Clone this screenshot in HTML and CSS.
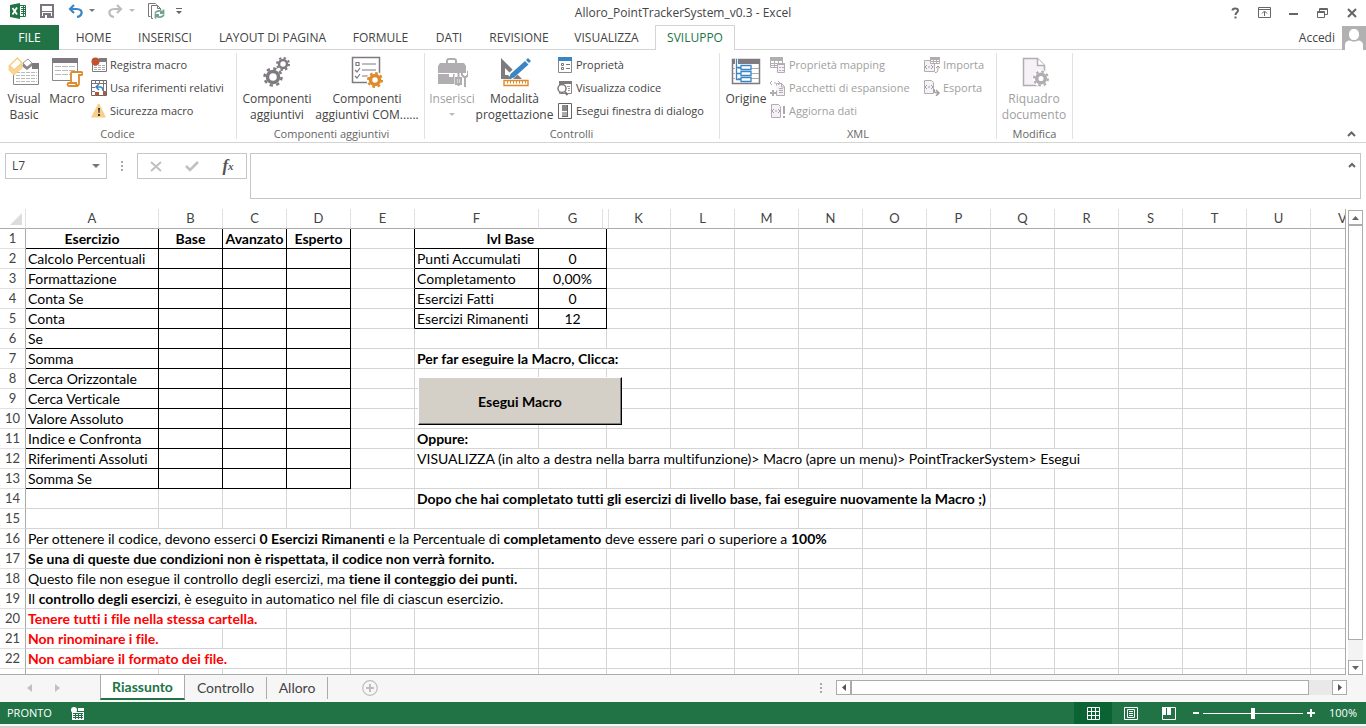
FILE: index.html
```html
<!DOCTYPE html>
<html lang="it">
<head>
<meta charset="utf-8">
<title>Alloro_PointTrackerSystem_v0.3 - Excel</title>
<link rel="stylesheet" href="styles.css">
</head>
<body>
<header class="titlebar">
  <div class="quick">
    <svg class="q-excel" width="16" height="16" viewBox="0 0 16 16"><path fill="#217346" d="M0 2 10 0v16L0 14z"/><path fill="#fff" stroke="#217346" d="M10 2.500h5.500v11H10"/><path stroke="#217346" stroke-width="1" fill="none" d="M11 4.500h4M11 6.500h4M11 8.500h4M11 10.500h4M13.500 3v10"/><path stroke="#fff" stroke-width="1.800" d="M2.500 5 7 11.500M7 4.500 2.500 11.500"/></svg>
    <button class="plain q-save" aria-label="Salva"><svg width="14" height="14" viewBox="0 0 14 14"><path fill="none" stroke="#7a757d" stroke-width="2" d="M1 1h12v12H1z"/><path fill="#7a757d" d="M1 7h12v1H1zM3 9h8v5H3z"/><path fill="#fff" d="M5 11h2v3H5z"/></svg></button>
    <button class="plain q-undo" aria-label="Annulla"><svg width="15" height="14" viewBox="0 0 15 14"><path fill="none" stroke="#3a86c4" stroke-width="2.200" d="M6 1 2 5l4 4M2 5h6.500c4 0 5.500 2 5 4.500-.300 1.500-2 3-4.500 3.500"/></svg></button>
    <button class="plain q-caret" aria-label="Elenco annulla"><svg width="6" height="4" viewBox="0 0 6 4"><path fill="#777" d="M0 0h6L3 3z"/></svg></button>
    <button class="plain q-redo" aria-label="Ripeti"><svg width="15" height="14" viewBox="0 0 15 14"><path fill="none" stroke="#bdbdbd" stroke-width="2.200" d="m9 1 4 4-4 4M13 5H6.500c-4 0-5.500 2-5 4.500.300 1.500 2 3 4.500 3.500"/></svg></button>
    <button class="plain q-caret" aria-label="Elenco ripeti"><svg width="6" height="4" viewBox="0 0 6 4"><path fill="#bbb" d="M0 0h6L3 3z"/></svg></button>
    <button class="plain q-doc" aria-label="Aggiorna"><svg width="17" height="16" viewBox="0 0 17 16"><path fill="none" stroke="#777" d="M2.500 13.500h-2V.500h7l1 1M5 15.500H3.500v-13h6l3 3V7M9.500 2.500v3h3"/><path fill="none" stroke="#6fa58a" stroke-width="1.800" d="M7 10.500C8 7.500 13 7 15 9.500M15.500 6.500v3.500H12M16 11.500c-1 3-6 3.500-8 1M7.500 15.500V12H11"/></svg></button>
    <button class="plain q-more" aria-label="Personalizza barra"><svg width="6" height="8" viewBox="0 0 6 8"><path fill="#666" d="M0 1h6v1H0zM0 4h6L3 7z"/></svg></button>
  </div>
  <h1 class="title">Alloro_PointTrackerSystem_v0.3 - Excel</h1>
  <div class="window">
    <button class="plain" aria-label="Guida"><svg width="9" height="12" viewBox="0 0 9 12"><path fill="none" stroke="#666" stroke-width="2" d="M1.500 3.500C1.500 1 7 .500 7 3.500c0 2-2.500 2-2.500 4.500M4.500 9.500v2"/></svg></button>
    <button class="plain" aria-label="Opzioni barra multifunzione"><svg width="13" height="11" viewBox="0 0 13 11"><path fill="none" stroke="#666" d="M.500.500h12v10H.500zM1 2.500h11M6.500 9V4.500M4 6.500 6.500 4 9 6.500"/></svg></button>
    <button class="plain" aria-label="Riduci"><svg width="10" height="10" viewBox="0 0 10 10"><path fill="#666" d="M0 5h9v2H0z"/></svg></button>
    <button class="plain" aria-label="Ripristina"><svg width="11" height="10" viewBox="0 0 11 10"><path fill="none" stroke="#666" d="M2.500 3V.500h8v6H8M2 1.500h8M.500 3.500h7v6H.500zM0 4.500h8"/></svg></button>
    <button class="plain" aria-label="Chiudi"><svg width="10" height="10" viewBox="0 0 10 10"><path stroke="#666" stroke-width="2" d="m1 1 8 8M9 1 1 9"/></svg></button>
  </div>
</header>

<nav class="tabs">
  <button class="tab file">FILE</button>
  <button class="tab">HOME</button>
  <button class="tab">INSERISCI</button>
  <button class="tab">LAYOUT DI PAGINA</button>
  <button class="tab">FORMULE</button>
  <button class="tab">DATI</button>
  <button class="tab">REVISIONE</button>
  <button class="tab">VISUALIZZA</button>
  <button class="tab current">SVILUPPO</button>
  <a class="account" href="#">Accedi
    <svg width="24" height="24" viewBox="0 0 24 24"><path fill="#b1b1b1" d="M0 0h24v24H0z"/><path fill="#fff" d="M12 3c3 0 5 2 5 5.500S15 14 12 14s-5-2-5-5.500S9 3 12 3zM3 24v-5c0-3 2-4.500 5-4.500 2 1.500 6 1.500 8 0 3 0 5 1.500 5 4.500v5z"/></svg>
  </a>
</nav>

<section class="ribbon">
  <div class="group g-code">
    <div class="tools">
      <button class="big w42"><svg width="32" height="32" viewBox="0 0 32 32"><path fill="#fff" stroke="#8a868c" d="M5.500 9.500h25v19h-25z"/><path fill="#7f7a80" d="M24 7h7v6h-7z"/><path stroke="#bbb" stroke-dasharray="4 1" d="M8 16.500h21M8 19.500h21M8 22.500h21M8 25.500h21"/><path fill="#fbd596" stroke="#f6ce85" d="m1 10 5 3 8-6v5l-8 7-5-5z"/><path fill="#fff" stroke="#f6ce85" stroke-width="1.500" d="m1.500 9.500 8-7.500 4.500 5-8 7z"/><path fill="#8a868c" d="m15 7 4 2 5-3v4l-5 4-4-3z"/><path fill="#fff" stroke="#999" d="m15 7 5-4 4 4-5 4z"/></svg><span>Visual<br>Basic</span></button>
      <button class="big w44"><svg width="32" height="32" viewBox="0 0 32 32"><path fill="#fff" stroke="#8a868c" d="M1.500 3.500h25v21h-25z"/><path fill="#7f7a80" d="M1 2h26v5H1z"/><path stroke="#bbb" stroke-dasharray="6 1" d="M4 10.500h20M4 14.500h20M4 18.500h20"/><path fill="#fff" stroke="#dd8b2b" stroke-width="1.800" d="M20 27V17c0-1 1-1 1-1h9c2 0 2 3 0 3h-2v8c0 3-2 3-3 3h-7c-2 0-2-3 0-3h7c0 2 1 3 2 3"/></svg><span>Macro</span></button>
      <div class="smalls">
        <button class="small"><svg width="16" height="16" viewBox="0 0 16 16"><path fill="#fff" stroke="#7f7a80" d="M1.500 2.500h14v12h-14z"/><path fill="#7f7a80" d="M8 1h8v4H8z"/><path stroke="#aaa" stroke-dasharray="3 1" d="M3 8.500h11M3 10.500h11M3 12.500h11"/><circle cx="4.500" cy="4.500" r="4" fill="#c0532d"/></svg>Registra macro</button>
        <button class="small"><svg width="16" height="16" viewBox="0 0 16 16"><path fill="#fff" stroke="#666" d="M.500.500h15v15H.500z"/><path fill="none" stroke="#777" d="M4.500 0v16M8.500 0v4M12.500 0v16M0 3.500h16M0 7.500h4M0 11.500h16"/><path fill="#fff" d="M4 4h8v8H4z"/><path fill="none" stroke="#3a86c4" stroke-width="1.500" d="M8 4 5 7l3 3M5 7h4c3 0 3 2 3 4"/><path fill="#c0532d" d="M4 12h4v3H4zM12 12h3v3h-3z"/></svg>Usa riferimenti relativi</button>
        <button class="small"><svg width="16" height="16" viewBox="0 0 16 16"><path fill="#f9cf87" d="M7 1h1.500L15 14.500H0z"/><path fill="#333" d="M7 5h2l-.500 5h-1zM7 11h2v2H7z"/></svg>Sicurezza macro</button>
      </div>
    </div>
    <div class="caption">Codice</div>
  </div>
  <div class="group g-addins">
    <div class="tools">
      <button class="big w76"><svg width="32" height="32" viewBox="0 0 32 32"><g fill="none" stroke="#7f7a80"><circle cx="12" cy="21" r="5.500" stroke-width="3.500"/><circle cx="12" cy="21" r="8.500" stroke-width="2.500" stroke-dasharray="3.300 3.370"/><circle cx="22" cy="8" r="4" stroke-width="2.500"/><circle cx="22" cy="8" r="6" stroke-width="2" stroke-dasharray="2.300 2.410"/></g></svg><span>Componenti<br>aggiuntivi</span></button>
      <button class="big w104"><svg width="32" height="32" viewBox="0 0 32 32"><path fill="#fff" stroke="#7f7a80" stroke-width="1.500" d="M1.500 1.500h27v25h-27z"/><path stroke="#7f7a80" stroke-width="1.200" fill="none" d="M5 6.500h3v3H5zM11 8h14M11 14h14M11 20h8M4 14l2 2 3-4M4 20l2 2 3-4"/><circle cx="24" cy="24" r="8.500" fill="#fff"/><circle cx="24" cy="24" r="4.500" fill="none" stroke="#dd8b2b" stroke-width="3.500"/><circle cx="24" cy="24" r="7" fill="none" stroke="#dd8b2b" stroke-width="2" stroke-dasharray="2.750 2.750"/></svg><span>Componenti<br>aggiuntivi COM......</span></button>
    </div>
    <div class="caption">Componenti aggiuntivi</div>
  </div>
  <div class="group g-controls">
    <div class="tools">
      <button class="big w48" disabled><svg width="32" height="32" viewBox="0 0 32 32"><path fill="none" stroke="#b1aeb2" stroke-width="2" d="M11 8V5c0-1 1-2 2-2h5c1 0 2 1 2 2v3"/><path fill="#b1aeb2" d="M4 7h24l2 3v7H2v-7zM2 18h11v3h4v-3h13v10H2z"/><path stroke="#fff" stroke-width="7" d="M22 18v12M28 18v12"/><path fill="none" stroke="#b1aeb2" stroke-width="2" d="M22.500 16v14M20 22h5v6h-5zM29 31V21M26 15v4l2 2h2l2-2v-4"/></svg><span>Inserisci</span><svg class="drop" width="6" height="4" viewBox="0 0 6 4"><path fill="#bbb" d="M0 0h6L3 3z"/></svg></button>
      <button class="big w77"><svg width="32" height="32" viewBox="0 0 32 32"><path fill="#7f7a80" fill-rule="evenodd" d="M2 2 23 23H2zM6 12v7h7z"/><path stroke="#fff" stroke-width="7" d="M11 21 31 2"/><path fill="#3a86c4" d="m10 23 1.500-5L26 5l3.500 3.500L15 21.500zM27 4l2-2 3 3-2 2z"/><path fill="#fff" stroke="#dd8b2b" stroke-width="1.400" d="M5 24.500h24v5H5z"/><path stroke="#dd8b2b" d="M8.500 25v2.500M11.500 25v2.500M14.500 25v2.500M17.500 25v2.500M20.500 25v2.500M23.500 25v2.500M26.500 25v2.500"/></svg><span>Modalità<br>progettazione</span></button>
      <div class="smalls wide">
        <button class="small"><svg width="16" height="16" viewBox="0 0 16 16"><path fill="#fff" stroke="#8a868c" d="M1.500 1.500h13v14h-13z"/><path fill="#3a86c4" d="M1 0h14v4H1z"/><path fill="none" stroke="#777" d="M4.500 6.500h2v2h-2zM4.500 10.500h2v2h-2zM9 7.500h4M9 11.500h4"/></svg>Proprietà</button>
        <button class="small"><svg width="16" height="16" viewBox="0 0 16 16"><path fill="#fff" stroke="#8a868c" d="M2.500 2.500h12v11h-12z"/><path fill="#7f7a80" d="M2 1h13v3H2z"/><path stroke="#999" d="M10 6.500h3M11 8.500h2M11 10.500h2"/><circle cx="5" cy="8.500" r="4" fill="#fff" stroke="#777" stroke-width="1.500"/><path stroke="#777" stroke-width="2" d="m8 12 2.500 3"/></svg>Visualizza codice</button>
        <button class="small"><svg width="16" height="16" viewBox="0 0 16 16"><path fill="#fff" stroke="#666" d="M1.500.500h13v15h-13z"/><path fill="#8a868c" d="M5 2h6v6H5z"/><path fill="#aaa" d="M5 9h6v5H5z"/><path stroke="#666" d="M10.500 2v12M5 13.500h6"/></svg>Esegui finestra di dialogo</button>
      </div>
    </div>
    <div class="caption">Controlli</div>
  </div>
  <div class="group g-xml">
    <div class="tools">
      <button class="big w44"><svg width="32" height="32" viewBox="0 0 32 32"><path fill="#fff" stroke="#7f7a80" stroke-width="1.500" d="M2.500 3.500h27v24h-27z"/><path fill="#7f7a80" d="M2 3h28v5H2z"/><path stroke="#aaa" d="M3 12.500h26M3 17.500h26M3 22.500h26"/><path fill="none" stroke="#fff" stroke-width="3" d="M6.500 3v21"/><path fill="none" stroke="#3a86c4" stroke-width="1.300" d="M6.500 3v20.500H11M6.500 11.500H11M6.500 17.500H11"/><path fill="#fff" stroke="#3a86c4" stroke-width="1.300" d="M11 9.500h10v4H11zM11 15.500h10v4H11zM11 21.500h10v4H11z"/></svg><span>Origine</span></button>
      <div class="smalls first">
        <button class="small" disabled><svg width="16" height="16" viewBox="0 0 16 16"><path fill="#fff" stroke="#b1aeb2" d="M.500 1.500h12v9H.500zM4.500 4v6M8.500 4v6M0 6.500h12M0 8.500h12"/><path fill="#b1aeb2" d="M0 0h13v4H0z"/><path fill="#f6f1f6" stroke="#b1aeb2" d="M7.500 6.500h7v9h-7z"/><path fill="#b1aeb2" d="M7 6h8v2H7zM9 10h2v1H9zM12 10h2v1h-2zM9 13h2v1H9zM12 13h2v1h-2z"/></svg>Proprietà mapping</button>
        <button class="small" disabled><svg width="16" height="16" viewBox="0 0 16 16"><path fill="#f6f1f6" stroke="#b1aeb2" d="M6.500 5.500V3.500h5l3 3v9h-8v-5"/><path fill="none" stroke="#b1aeb2" d="M11.500 3v4h3M9 8.500h4M9 10.500h4M9 12.500h4M2 1 0 3l2 2M8 1l2 2-2 2M4 3h2"/><path stroke="#b1aeb2" stroke-width="2" d="M3 10v6M0 13h6"/></svg>Pacchetti di espansione</button>
        <button class="small" disabled><svg width="16" height="16" viewBox="0 0 16 16"><path fill="#f6f1f6" stroke="#b1aeb2" d="M1.500 1.500h7l2 2v11h-9z"/><path fill="none" stroke="#a09da1" d="m4 6-2 2 2 2M8 6l2 2-2 2M5 8h2"/><path stroke="#aaa" stroke-width="2" d="M14 3v8M14 13v2"/></svg>Aggiorna dati</button>
      </div>
      <div class="smalls">
        <button class="small" disabled><svg width="16" height="16" viewBox="0 0 16 16"><path fill="#f6f1f6" stroke="#b1aeb2" d="M.500 3.500h10v11H.500z"/><path fill="#b1aeb2" d="M6 0h10v3H6z"/><path fill="#fff" stroke="#b1aeb2" d="M6.500 2.500h9v4h-9zM9.500 2v4M12.500 2v4M6 4.500h9"/><path fill="none" stroke="#a09da1" d="m3 8-2 2 2 2M7 8l2 2-2 2M4 10h2M11 15.500c3 0 3-2 3-6M12 11l2-2 2 2"/></svg>Importa</button>
        <button class="small" disabled><svg width="16" height="16" viewBox="0 0 16 16"><path fill="#f6f1f6" stroke="#b1aeb2" d="M.500.500h7l2 2v11h-9z"/><path fill="none" stroke="#a09da1" d="m3 5-2 2 2 2M7 5l2 2-2 2M4 7h2"/><path fill="none" stroke="#a09da1" stroke-width="1.500" d="M10 9c0 4 1 4 5 4M12 10l3 3-3 3"/></svg>Esporta</button>
      </div>
    </div>
    <div class="caption">XML</div>
  </div>
  <div class="group g-edit">
    <div class="tools">
      <button class="big w74" disabled><svg width="32" height="32" viewBox="0 0 32 32"><path fill="#f6f1f6" stroke="#b1aeb2" stroke-width="1.500" d="M5.500 2.500h14l7 7v20h-21z"/><path fill="#fff" stroke="#b1aeb2" stroke-width="1.500" d="M19.500 2.500v7h7"/><circle cx="23" cy="22.500" r="8.500" fill="#fff"/><circle cx="23" cy="22.500" r="4.300" fill="none" stroke="#b1aeb2" stroke-width="3.500"/><circle cx="23" cy="22.500" r="7" fill="none" stroke="#b1aeb2" stroke-width="2" stroke-dasharray="2.750 2.750"/></svg><span>Riquadro<br>documento</span></button>
    </div>
    <div class="caption">Modifica</div>
  </div>
  <button class="plain collapse" aria-label="Comprimi barra multifunzione"><svg width="9" height="6" viewBox="0 0 9 6"><path fill="none" stroke="#666" stroke-width="2" d="m1 5 3.500-3.500L8 5"/></svg></button>
</section>

<section class="formula-bar">
  <div class="namebox"><input aria-label="Casella nome" value="L7"><button class="plain" aria-label="Elenco nomi"><svg width="8" height="5" viewBox="0 0 8 5"><path fill="#777" d="M0 0h8L4 4z"/></svg></button></div>
  <svg class="grip" width="4" height="11" viewBox="0 0 4 11"><path fill="#aaa" d="M1 0h2v2H1zM1 4h2v2H1zM1 8h2v2H1z"/></svg>
  <div class="entry">
    <button class="plain" aria-label="Annulla immissione"><svg width="12" height="11" viewBox="0 0 12 11"><path stroke="#c0c0c0" stroke-width="2" d="m1 1 10 9M11 1 1 10"/></svg></button>
    <button class="plain" aria-label="Invio"><svg width="14" height="11" viewBox="0 0 14 11"><path fill="none" stroke="#c0c0c0" stroke-width="2.500" d="m1 5 4 4 8-8"/></svg></button>
    <button class="plain fx" aria-label="Inserisci funzione"><i>f</i><sub>x</sub></button>
  </div>
  <div class="formula"><textarea aria-label="Barra della formula"></textarea><button class="plain" aria-label="Comprimi barra della formula"><svg width="8" height="6" viewBox="0 0 8 6"><path fill="none" stroke="#666" stroke-width="2" d="m1 5 3-3 3 3"/></svg></button></div>
</section>

<main class="sheet">
  <div class="grid-area">
    <table class="cells">
      <colgroup><col class="c-head"><col class="c-a"><col span="4" class="c-std"><col class="c-f"><col class="c-g"><col span="12" class="c-std"></colgroup>
      <thead>
        <tr><th class="corner"><svg width="12" height="12" viewBox="0 0 12 12"><path fill="#dcdcdc" d="M12 0v12H0z"/></svg></th><th>A</th><th>B</th><th>C</th><th>D</th><th>E</th><th>F</th><th class="hidden-next">G</th><th>K</th><th>L</th><th>M</th><th>N</th><th>O</th><th>P</th><th>Q</th><th>R</th><th>S</th><th>T</th><th>U</th><th>V</th></tr>
      </thead>
      <tbody>
        <tr><th>1</th><td class="k b c">Esercizio</td><td class="k b c">Base</td><td class="k b c">Avanzato</td><td class="k b c">Esperto</td><td class="kr"></td><td class="k b c" colspan="2">lvl Base</td><td><td><td><td><td><td><td><td><td><td><td><td></tr>
        <tr><th>2</th><td class="k">Calcolo Percentuali</td><td class="k"><td class="k"><td class="k"><td class="kr"><td class="k">Punti Accumulati</td><td class="k c">0</td><td><td><td><td><td><td><td><td><td><td><td><td></tr>
        <tr><th>3</th><td class="k">Formattazione</td><td class="k"><td class="k"><td class="k"><td class="kr"><td class="k">Completamento</td><td class="k c">0,00%</td><td><td><td><td><td><td><td><td><td><td><td><td></tr>
        <tr><th>4</th><td class="k">Conta Se</td><td class="k"><td class="k"><td class="k"><td class="kr"><td class="k">Esercizi Fatti</td><td class="k c">0</td><td><td><td><td><td><td><td><td><td><td><td><td></tr>
        <tr><th>5</th><td class="k">Conta</td><td class="k"><td class="k"><td class="k"><td class="kr"><td class="k">Esercizi Rimanenti</td><td class="k c">12</td><td><td><td><td><td><td><td><td><td><td><td><td></tr>
        <tr><th>6</th><td class="k">Se</td><td class="k"><td class="k"><td class="k"><td><td><td><td><td><td><td><td><td><td><td><td><td><td><td></tr>
        <tr><th>7</th><td class="k">Somma</td><td class="k"><td class="k"><td class="k"><td><td class="b" colspan="3">Per far eseguire la Macro, Clicca:</td><td><td><td><td><td><td><td><td><td><td><td></tr>
        <tr><th>8</th><td class="k">Cerca Orizzontale</td><td class="k"><td class="k"><td class="k"><td><td class="host"><button class="run-macro">Esegui Macro</button></td><td><td><td><td><td><td><td><td><td><td><td><td><td></tr>
        <tr><th>9</th><td class="k">Cerca Verticale</td><td class="k"><td class="k"><td class="k"><td><td><td><td><td><td><td><td><td><td><td><td><td><td><td></tr>
        <tr><th>10</th><td class="k">Valore Assoluto</td><td class="k"><td class="k"><td class="k"><td><td><td><td><td><td><td><td><td><td><td><td><td><td><td></tr>
        <tr><th>11</th><td class="k">Indice e Confronta</td><td class="k"><td class="k"><td class="k"><td><td class="b">Oppure:</td><td><td><td><td><td><td><td><td><td><td><td><td><td></tr>
        <tr><th>12</th><td class="k">Riferimenti Assoluti</td><td class="k"><td class="k"><td class="k"><td><td colspan="10">VISUALIZZA (in alto a destra nella barra multifunzione)&gt; Macro (apre un menu)&gt; PointTrackerSystem&gt; Esegui</td><td><td><td><td></tr>
        <tr><th>13</th><td class="k">Somma Se</td><td class="k"><td class="k"><td class="k"><td><td><td><td><td><td><td><td><td><td><td><td><td><td><td></tr>
        <tr><th>14</th><td><td><td><td><td><td class="b" colspan="8">Dopo che hai completato tutti gli esercizi di livello base, fai eseguire nuovamente la Macro ;)</td><td><td><td><td><td><td></tr>
        <tr><th>15</th><td><td><td><td><td><td><td><td><td><td><td><td><td><td><td><td><td><td><td></tr>
        <tr><th>16</th><td colspan="11">Per ottenere il codice, devono esserci <b>0 Esercizi Rimanenti</b> e la Percentuale di <b>completamento</b> deve essere pari o superiore a <b>100%</b></td><td><td><td><td><td><td><td><td></tr>
        <tr><th>17</th><td class="b" colspan="6">Se una di queste due condizioni non è rispettata, il codice non verrà fornito.</td><td><td><td><td><td><td><td><td><td><td><td><td><td></tr>
        <tr><th>18</th><td colspan="6">Questo file non esegue il controllo degli esercizi, ma <b>tiene il conteggio dei punti.</b></td><td><td><td><td><td><td><td><td><td><td><td><td><td></tr>
        <tr><th>19</th><td colspan="6">Il <b>controllo degli esercizi</b>, è eseguito in automatico nel file di ciascun esercizio.</td><td><td><td><td><td><td><td><td><td><td><td><td><td></tr>
        <tr><th>20</th><td class="b red" colspan="3">Tenere tutti i file nella stessa cartella.</td><td><td><td><td><td><td><td><td><td><td><td><td><td><td><td><td></tr>
        <tr><th>21</th><td class="b red" colspan="2">Non rinominare i file.</td><td><td><td><td><td><td><td><td><td><td><td><td><td><td><td><td><td></tr>
        <tr><th>22</th><td class="b red" colspan="3">Non cambiare il formato dei file.</td><td><td><td><td><td><td><td><td><td><td><td><td><td><td><td><td></tr>
        <tr><th></th><td><td><td><td><td><td><td><td><td><td><td><td><td><td><td><td><td><td><td></tr>
      </tbody>
    </table>
  </div>
  <div class="vscroll">
    <button class="plain arrow" aria-label="Scorri su"><svg width="7" height="4" viewBox="0 0 7 4"><path fill="#666" d="M0 4h7L3.500 0z"/></svg></button>
    <div class="vthumb"></div>
    <div class="vtrack"></div>
    <button class="plain arrow" aria-label="Scorri giù"><svg width="7" height="4" viewBox="0 0 7 4"><path fill="#666" d="M0 0h7L3.500 4z"/></svg></button>
  </div>
</main>

<footer class="sheetbar">
  <div class="sheetnav">
    <button class="plain" aria-label="Foglio precedente"><svg width="5" height="8" viewBox="0 0 5 8"><path fill="#c0c0c0" d="M5 0v8L0 4z"/></svg></button>
    <button class="plain" aria-label="Foglio successivo"><svg width="5" height="8" viewBox="0 0 5 8"><path fill="#c0c0c0" d="M0 0v8l5-4z"/></svg></button>
  </div>
  <button class="sheettab on">Riassunto</button>
  <button class="sheettab w82">Controllo</button>
  <button class="sheettab w61">Alloro</button>
  <button class="plain add" aria-label="Nuovo foglio"><svg width="16" height="16" viewBox="0 0 16 16"><circle cx="8" cy="8" r="7.300" fill="none" stroke="#bdbdbd" stroke-width="1.200"/><path stroke="#bdbdbd" stroke-width="2" d="M8 4v8M4 8h8"/></svg></button>
  <svg class="hgrip" width="4" height="11" viewBox="0 0 4 11"><path fill="#aaa" d="M1 0h2v2H1zM1 4h2v2H1zM1 8h2v2H1z"/></svg>
  <div class="hscroll">
    <button class="plain arrow" aria-label="Scorri a sinistra"><svg width="4" height="7" viewBox="0 0 4 7"><path fill="#555" d="M4 0v7L0 3.500z"/></svg></button>
    <div class="hthumb"></div>
    <button class="plain arrow" aria-label="Scorri a destra"><svg width="4" height="7" viewBox="0 0 4 7"><path fill="#555" d="M0 0v7l4-3.500z"/></svg></button>
  </div>
</footer>
<footer class="status">
  <span class="ready">PRONTO</span>
  <button class="plain" aria-label="Registra macro"><svg width="13" height="13" viewBox="0 0 13 13"><path fill="#fff" d="M7 1h6v3H7zM1 5h12v8H1z"/><path stroke="#217346" d="M2 6.500h10M2 8.500h10M2 10.500h10M4.500 6v6M7.500 6v6M10.500 6v6"/><circle cx="3" cy="3" r="3" fill="#fff"/></svg></button>
  <div class="views">
    <button class="plain view sel" aria-label="Normale"><svg width="13" height="13" viewBox="0 0 13 13"><path fill="none" stroke="#fff" d="M.500.500h12v12H.500zM4.500 0v13M8.500 0v13M0 4.500h13M0 8.500h13"/></svg></button>
    <button class="plain view" aria-label="Layout di pagina"><svg width="14" height="13" viewBox="0 0 14 13"><path fill="none" stroke="#fff" d="M.500.500h13v12H.500zM3.500 2.500h7v8h-7zM5 4.500h4M5 6.500h4M5 8.500h4"/></svg></button>
    <button class="plain view" aria-label="Anteprima interruzioni"><svg width="14" height="13" viewBox="0 0 14 13"><path fill="none" stroke="#fff" d="M.500.500h13v12H.500z"/><path fill="#fff" d="M0 0h4v8H0zM5 0h4v8H5z"/></svg></button>
  </div>
  <button class="plain" aria-label="Zoom indietro"><svg width="6" height="8" viewBox="0 0 6 8"><path fill="#fff" d="M0 3h6v2H0z"/></svg></button>
  <input class="zoom" type="range" min="0" max="100" value="50" aria-label="Zoom">
  <button class="plain" aria-label="Zoom avanti"><svg width="8" height="8" viewBox="0 0 8 8"><path fill="#fff" d="M0 3h8v2H0zM3 0h2v8H3z"/></svg></button>
  <button class="plain percent">100%</button>
</footer>
<div class="edge"></div>
</body>
</html>
```
FILE: styles.css
```css
* { box-sizing: border-box; }

body {
  margin: 0;
  height: 100vh;
  display: flex;
  flex-direction: column;
  overflow: hidden;
  background: #fff;
  color: #444;
  font: 12px/16px "Open Sans", "Noto Sans", sans-serif;
}

button, input, textarea { font: inherit; color: inherit; }
button { padding: 0; border: 0; background: none; white-space: nowrap; }
svg { display: block; flex: none; }

.plain { display: flex; align-items: center; justify-content: center; }

/* title bar */
.titlebar {
  flex: none;
  height: 25px;
  display: grid;
  grid-template-columns: 1fr auto 1fr;
  align-items: center;
}
.quick { display: flex; align-items: center; padding: 0 0 3px 10px; }
.q-save, .q-undo { margin-left: 14px; }
.q-caret { margin-left: 6px; }
.q-redo { margin-left: 13px; }
.q-doc { margin-left: 13px; }
.q-more { margin-left: 11px; }
.title { margin: 0; font-size: 12px; font-weight: 400; }
.window { display: flex; justify-content: flex-end; }
.window button { width: 29px; height: 23px; }

/* ribbon tabs */
.tabs {
  flex: none;
  height: 25px;
  display: grid;
  grid-template-columns: 59px 69px 74px 141px 75px 62px 78px 97px 80px 1fr;
  border-bottom: 1px solid #d4d4d4;
}
.tab { height: 25px; }
.file { background: #217346; color: #fff; }
.current {
  border: 1px solid #d4d4d4;
  border-bottom: 0;
  background: #fff;
  color: #217346;
}
.account {
  display: flex;
  align-items: center;
  justify-content: flex-end;
  gap: 7px;
  color: inherit;
  text-decoration: none;
}

/* ribbon */
.ribbon {
  flex: none;
  display: flex;
  height: 93px;
  padding: 3px 0;
  border-bottom: 1px solid #d4d4d4;
}
.group {
  display: flex;
  flex-direction: column;
  border-right: 1px solid #e1e1e1;
}
.g-code { width: 237px; padding-left: 3px; }
.g-addins { width: 188px; padding-left: 2px; }
.g-controls { width: 295px; padding-left: 3px; }
.g-xml { width: 277px; padding-left: 4px; }
.g-edit { width: 76px; }
.tools { flex: none; display: flex; height: 73px; }
.caption { font-size: 11px; line-height: 16px; text-align: center; color: #666; }
.g-code .caption, .g-xml .caption, .g-controls .caption { padding-right: 4px; }
.big {
  display: flex;
  flex-direction: column;
  align-items: center;
  padding-top: 3px;
}
.big > span { margin-top: 3px; line-height: 16px; }
.drop { margin-top: 6px; }
.w42 { width: 42px; }
.w44 { width: 44px; }
.w48 { width: 48px; }
.w74 { width: 74px; }
.w76 { width: 76px; }
.w77 { width: 77px; }
.w104 { width: 104px; }
.smalls { display: flex; flex-direction: column; padding-left: 2px; }
.smalls.first { width: 154px; }
.smalls.wide { padding-left: 4px; }
.small {
  display: flex;
  align-items: center;
  gap: 3px;
  height: 23px;
  font-size: 11px;
}
button:disabled { color: #a0a0a0; }
.collapse { margin-left: auto; width: 30px; align-self: flex-end; height: 10px; }

/* formula bar */
.formula-bar {
  flex: none;
  display: flex;
  align-items: flex-start;
  padding: 10px 5px 10px 5px;
}
.namebox, .entry, .formula { display: flex; border: 1px solid #c6c6c6; background: #fff; }
.namebox { width: 102px; height: 26px; }
.namebox input { flex: 1; min-width: 0; padding: 0 6px; border: 0; outline: 0; }
.namebox button { width: 20px; }
.grip { margin: 8px 13px 0 13px; }
.entry { width: 110px; height: 26px; }
.entry button { flex: 1; }
.fx { font-family: "Liberation Serif", serif; font-size: 17px; color: #555; font-weight: 700; }
.fx sub { font-size: 11px; line-height: 12px; font-style: italic; }
.formula { flex: 1; height: 46px; margin-left: 3px; align-items: flex-start; }
.formula textarea { flex: 1; height: 44px; padding: 2px 6px; border: 0; outline: 0; resize: none; }
.formula button { width: 16px; height: 22px; }

/* worksheet */
.sheet { flex: 1; min-height: 0; display: flex; background: #fff; }
.grid-area {
  flex: 1;
  min-width: 0;
  overflow: hidden;
  border-bottom: 1px solid #ababab;
  border-right: 1px solid #ababab;
}
.cells {
  width: 1375px;
  table-layout: fixed;
  border-collapse: separate;
  border-spacing: 0;
  font: 14px/19px Lato, "Open Sans", sans-serif;
  font-variant-ligatures: none;
  color: #000;
}
.c-head { width: 26px; }
.c-a { width: 133px; }
.c-std { width: 64px; }
.c-f { width: 124px; }
.c-g { width: 68px; }
.cells th, .cells td {
  height: 20px;
  padding: 0 2px;
  border-right: 1px solid #d4d4d4;
  border-bottom: 1px solid #d4d4d4;
  white-space: nowrap;
  text-align: left;
}
.cells th { padding: 0; font-size: 13px; font-weight: 400; text-align: center; color: #444; }
.cells thead th { border-right-color: #e1e1e1; border-bottom-color: #ababab; }
.cells tbody th { border-right-color: #ababab; border-bottom-color: #e1e1e1; }
.cells thead .corner { border-right-color: #e1e1e1; }
.corner svg { margin-left: 10px; }
.cells thead .hidden-next { position: relative; border-right-color: transparent; border-bottom-color: #ababab; }
.hidden-next::after {
  content: "";
  position: absolute;
  top: 0;
  right: -3px;
  width: 5px;
  height: 19px;
  border: solid #e1e1e1;
  border-width: 0 1px;
}
.cells .k { border-color: #000; }
.cells .kr { border-right-color: #000; }
.cells .c { text-align: center; }
.cells .b { font-weight: 700; }
.cells .red { color: #f00; }
.cells .host { position: relative; }
.run-macro {
  position: absolute;
  z-index: 1;
  left: 3px;
  top: 8px;
  width: 204px;
  height: 48px;
  border: 1px solid #000;
  border-top-color: #fff;
  border-left-color: #fff;
  background: #d4d0c8;
  box-shadow: inset -1px -1px #808080;
  font-weight: 700;
}

/* scroll bars */
.arrow { flex: none; width: 15px; height: 15px; border: 1px solid #ababab; background: #fff; }
.vscroll {
  width: 20px;
  padding: 1px 3px 0 2px;
  display: flex;
  flex-direction: column;
}
.vthumb { flex: 1; border: 1px solid #ababab; background: #fff; }
.vtrack { flex: none; height: 20px; background: #f3f3f3; }

/* sheet tabs */
.sheetbar {
  flex: none;
  height: 27px;
  display: flex;
  align-items: flex-start;
  background: #f6f6f6;
}
.sheetnav { display: flex; width: 100px; padding: 0 29px 0 15px; }
.sheetnav button { width: 28px; height: 26px; }
.sheettab {
  height: 22px;
  margin-top: 2px;
  border-right: 1px solid #ababab;
  font: 14px/20px Lato, "Open Sans", sans-serif;
}
.on {
  width: 85px;
  height: 25px;
  margin-top: 0;
  border-left: 1px solid #ababab;
  border-bottom: 2px solid #217346;
  background: #fff;
  color: #217346;
  font-weight: 700;
}
.w82 { width: 82px; }
.w61 { width: 61px; }
.add { width: 83px; height: 26px; }
.hgrip { margin: 8px 13px 0 auto; }
.hscroll { display: flex; width: 38%; max-width: 511px; margin: 5px 19px 0 0; background: #e9e9e9; }
.hthumb { flex: 1; margin-right: 23px; border: 1px solid #ababab; background: #fff; }

/* status bar */
.status {
  flex: none;
  height: 22px;
  display: flex;
  align-items: center;
  padding: 0 8px 0 7px;
  background: #217346;
  color: #fff;
}
.ready { margin-right: 19px; font-size: 11px; }
.views { display: flex; margin-left: auto; margin-right: 5px; }
.view { width: 38px; height: 22px; }
.sel { background: #0a6332; }
.zoom {
  appearance: none;
  width: 100px;
  height: 12px;
  margin: 0 4px;
  background: linear-gradient(#fff, #fff) center / 100% 1px no-repeat;
}
.zoom::-webkit-slider-thumb {
  appearance: none;
  width: 4px;
  height: 11px;
  background: #fff;
}
.percent { width: 30px; margin-left: 13px; font-size: 11px; }
.edge { flex: none; height: 4px; border-top: 2px solid #f6f6f6; background: #d4d0c8; }
```
